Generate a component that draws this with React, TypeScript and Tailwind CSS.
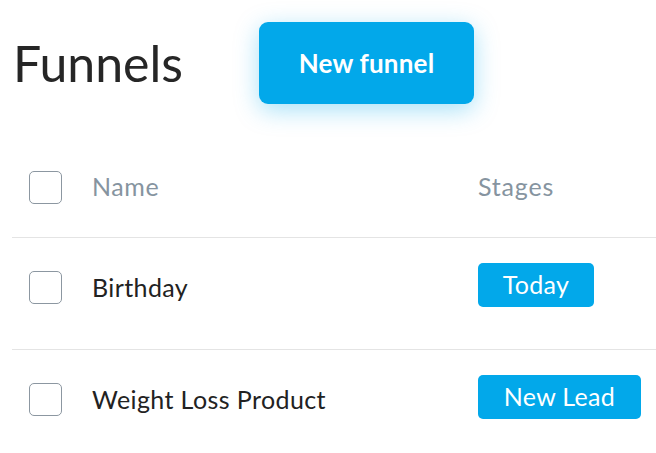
import React from "react";

const Check = () => (
  <div className="w-[33px] h-[33px] rounded-[5px] border border-[#8c97a1] bg-white shrink-0" />
);

const rows = [
  { name: "Birthday", stage: "Today", w: "w-[116px]" },
  { name: "Weight Loss Product", stage: "New Lead", w: "w-[163px]" },
];

export default function App() {
  return (
    <div className="w-[656px] h-[453px] bg-white overflow-hidden" style={{ fontFamily: "Lato, 'Noto Sans', sans-serif" }}>
      <div className="flex items-start h-[137px] pt-[22px]">
        <h1 className="ml-[13px] mt-[11px] text-[50px] leading-[60px] text-[#262626] font-normal w-[246px]">Funnels</h1>
        <button className="w-[215px] h-[82px] rounded-[9px] bg-[#02a8ea] text-white text-[26px] font-bold tracking-[0.2px] shadow-[0_6px_24px_rgba(2,168,234,0.35)]">
          New funnel
        </button>
      </div>
      <div className="flex items-center h-[100px]">
        <div className="ml-[29px]"><Check /></div>
        <div className="ml-[30px] w-[386px] text-[25px] tracking-[0.6px] text-[#8694a0]">Name</div>
        <div className="text-[25px] tracking-[0.8px] text-[#8694a0]">Stages</div>
      </div>
      {rows.map((r) => (
        <div key={r.name} className="ml-[12px] border-t border-[#e4e4e4] h-[112px] pb-[12px] flex items-center">
          <div className="ml-[17px]"><Check /></div>
          <div className="ml-[30px] w-[386px] text-[25px] tracking-[0.4px] text-[#222]">{r.name}</div>
          <div className={`${r.w} h-[44px] mb-[5px] rounded-[5px] bg-[#02a8ea] text-white text-[25px] tracking-[0.3px] flex items-center justify-center`}>
            {r.stage}
          </div>
        </div>
      ))}
    </div>
  );
}
